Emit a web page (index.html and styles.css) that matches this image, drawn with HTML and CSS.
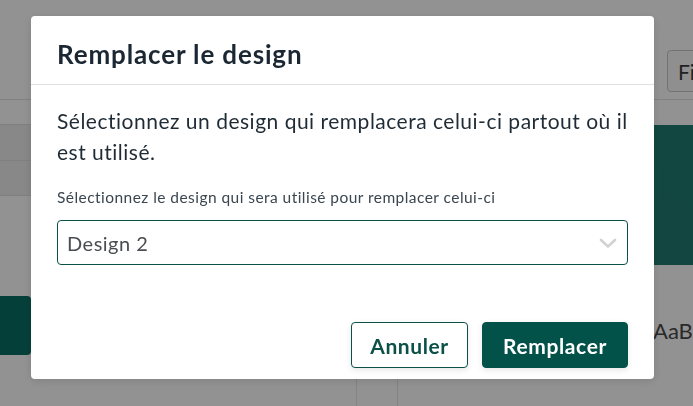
FILE: index.html
```html
<!DOCTYPE html>
<html lang="fr">
<head>
<meta charset="utf-8">
<title>Remplacer le design</title>
<link rel="stylesheet" href="styles.css">
</head>
<body>
<div class="page">
  <header class="topbar">
    <button class="filter-btn" type="button">Filtrer</button>
  </header>
  <div class="main">
    <aside class="sidebar">
      <div class="band"></div>
      <div class="band"></div>
      <div class="side-action"></div>
    </aside>
    <div class="middle"></div>
    <div class="narrow"></div>
    <section class="content">
      <div class="preview"></div>
      <div class="samples">AaBbCc</div>
    </section>
  </div>
</div>

<div class="backdrop">
  <div class="modal" role="dialog" aria-labelledby="modal-title">
    <div class="modal-header">
      <h2 id="modal-title" class="modal-title">Remplacer le design</h2>
    </div>
    <div class="modal-body">
      <p class="intro">Sélectionnez un design qui remplacera celui-ci partout où il est utilisé.</p>
      <label class="field-label" for="design-select">Sélectionnez le design qui sera utilisé pour remplacer celui-ci</label>
      <div class="select" id="design-select">
        <span class="select-value">Design 2</span>
        <svg class="chevron" width="18" height="10" viewBox="0 0 18 10" aria-hidden="true">
          <path d="M2 2 L9 8.5 L16 2" fill="none" stroke="#d2d2d2" stroke-width="2.6" stroke-linecap="round" stroke-linejoin="round"/>
        </svg>
      </div>
    </div>
    <div class="modal-footer">
      <button class="btn btn-secondary" type="button">Annuler</button>
      <button class="btn btn-primary" type="button">Remplacer</button>
    </div>
  </div>
</div>
</body>
</html>
```

FILE: styles.css
```css
* { box-sizing: border-box; }

html, body {
  margin: 0;
  padding: 0;
  width: 693px;
  height: 406px;
  overflow: hidden;
}

body {
  font-family: Lato, "Open Sans", sans-serif;
  background: #ffffff;
  color: #1d2a33;
}

/* ---------- background page ---------- */
.page {
  width: 693px;
  height: 406px;
  display: flex;
  flex-direction: column;
  background: #ffffff;
}

.topbar {
  height: 100px;
  flex: none;
  border-bottom: 1px solid #e2e2e2;
  padding: 50px 0 0 667px;
  display: flex;
  align-items: flex-start;
}

.filter-btn {
  height: 42px;
  width: 90px;
  flex: none;
  border: 1px solid #c8c8c8;
  border-radius: 4px;
  background: #fafafa;
  font-family: Lato, sans-serif;
  font-size: 21px;
  color: #3b3b3b;
  text-align: left;
  padding: 0 0 0 10px;
}

.main {
  flex: 1;
  display: grid;
  grid-template-columns: 31px 326px 41px 1fr;
}

.sidebar {
  padding-top: 24px;
  display: flex;
  flex-direction: column;
}

.band {
  height: 37px;
  background: #ededed;
  border-top: 1px solid #e0e0e0;
  border-bottom: 1px solid #e0e0e0;
}

.band + .band {
  height: 35px;
  border-top: none;
}

.side-action {
  margin-top: 100px;
  height: 59px;
  background: #096f66;
  border-radius: 0 4px 4px 0;
}

.middle {
  border-right: 1px solid #e6e6e6;
}

.narrow {
  border-right: 1px solid #e6e6e6;
}

.content {
  padding-top: 25px;
  display: flex;
  flex-direction: column;
}

.preview {
  height: 140px;
  background: linear-gradient(160deg, #1f7a70, #237b72);
}

.samples {
  margin-top: 52px;
  padding-left: 255px;
  font-family: Lato, sans-serif;
  font-size: 22px;
  color: #4a4a4a;
  white-space: nowrap;
}

/* ---------- modal ---------- */
.backdrop {
  position: fixed;
  inset: 0;
  background: rgba(0, 0, 0, 0.428);
  padding: 16px 39px 0 31px;
  display: flex;
  align-items: flex-start;
}

.modal {
  width: 623px;
  height: 363px;
  background: #ffffff;
  border-radius: 4px;
  box-shadow: 0 2px 10px rgba(0, 0, 0, 0.12);
  display: flex;
  flex-direction: column;
}

.modal-header {
  padding: 23px 26px 14px;
  border-bottom: 1px solid #e0e0e0;
}

.modal-title {
  margin: 0;
  font-size: 26px;
  line-height: 31px;
  font-weight: 700;
  letter-spacing: 0.85px;
  color: #1b2833;
}

.modal-body {
  padding: 20px 26px 0;
  display: flex;
  flex-direction: column;
}

.intro {
  margin: 0;
  font-size: 21px;
  line-height: 31px;
  letter-spacing: 0.5px;
  color: #1f2c36;
}

.field-label {
  margin-top: 20px;
  font-size: 15.5px;
  line-height: 20px;
  letter-spacing: 0.45px;
  color: #3a4650;
}

.select {
  margin-top: 13px;
  height: 45px;
  border: 1px solid #0b5148;
  border-radius: 4px;
  display: flex;
  align-items: center;
  justify-content: space-between;
  padding: 0 10px 0 9px;
}

.select-value {
  font-size: 20px;
  letter-spacing: 0.5px;
  color: #4a4d52;
}

.chevron {
  display: block;
}

.modal-footer {
  margin-top: auto;
  padding: 0 26px 11px;
  display: flex;
  justify-content: flex-end;
  gap: 14px;
}

.btn {
  height: 46px;
  border-radius: 4px;
  font-family: Lato, sans-serif;
  font-size: 21px;
  font-weight: 700;
  letter-spacing: 0.6px;
  padding: 0;
  box-shadow: 0 2px 6px rgba(0, 0, 0, 0.1);
  cursor: pointer;
}

.btn-secondary {
  width: 117px;
  background: #ffffff;
  border: 1px solid #0b5148;
  color: #0b5148;
}

.btn-primary {
  width: 146px;
  background: #03524a;
  border: 1px solid #03524a;
  color: #ffffff;
}
```
